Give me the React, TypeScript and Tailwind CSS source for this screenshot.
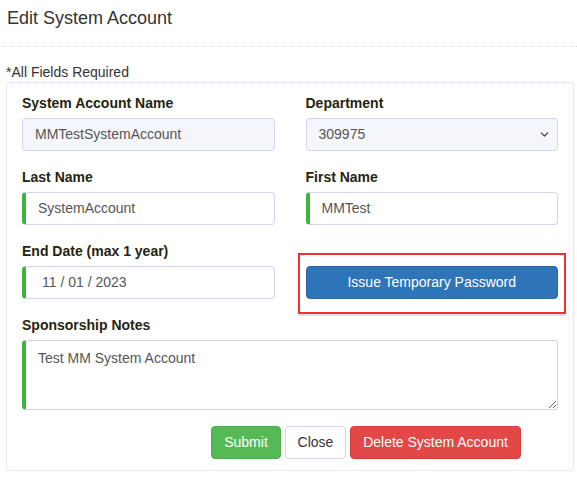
import React from 'react';
import { ChevronDown } from 'lucide-react';

const labelCls = 'block h-[20px] leading-[20px] text-[14px] font-bold text-[#24240f] mb-[5px]';

function TextInput({ value, pad = 'pl-[12px]' }: { value: string; pad?: string }) {
  return (
    <div className="h-[33px] flex items-center rounded-[4px] border border-[#d4d4ee] border-l-[4px] border-l-[#3db53d] bg-white">
      <span className={`${pad} text-[14px] text-[#555]`}>{value}</span>
    </div>
  );
}

function DisabledInput({ value, select }: { value: string; select?: boolean }) {
  return (
    <div className="h-[33px] flex items-center justify-between rounded-[4px] border border-[#d4d4ee] bg-[#f5f5fc] pl-[12px] pr-[6px]">
      <span className="text-[14px] text-[#555]">{value}</span>
      {select && <ChevronDown className="w-[13px] h-[13px] text-[#444]" strokeWidth={2.5} />}
    </div>
  );
}

export default function App() {
  return (
    <div className="w-[577px] h-[478px] bg-white font-['Liberation_Sans',Arial,sans-serif] text-[#333]">
      {/* Header */}
      <div className="h-[47px] border-b border-dotted border-[#d8d8f2] px-[7px] pt-[6px]">
        <h2 className="text-[18px] leading-[24px] text-[#333]">Edit System Account</h2>
      </div>

      <p className="px-[6px] pt-[16px] text-[14px] leading-[18px] text-[#333]">*All Fields Required</p>

      {/* Panel */}
      <div className="ml-[6px] mr-[3px] mt-[1px] h-[389px] rounded-[4px] border border-dotted border-[#d4d4ef] pl-[15px] pr-[15px] pt-[10px]">
        <div className="grid grid-cols-2 gap-x-[31px] gap-y-[16px]">
          <div>
            <label className={labelCls}>System Account Name</label>
            <DisabledInput value="MMTestSystemAccount" />
          </div>
          <div>
            <label className={labelCls}>Department</label>
            <DisabledInput value="309975" select />
          </div>
          <div>
            <label className={labelCls}>Last Name</label>
            <TextInput value="SystemAccount" />
          </div>
          <div>
            <label className={labelCls}>First Name</label>
            <TextInput value="MMTest" />
          </div>
          <div>
            <label className={labelCls}>End Date (max 1 year)</label>
            <TextInput value="11 / 01 / 2023" pad="pl-[16px]" />
          </div>
          <div className="flex flex-col justify-end">
            <div className="relative">
              <div className="absolute -left-[8px] -right-[8px] -top-[13px] -bottom-[15px] border-2 border-[#f03030] shadow-[0_2px_0_#dcdcf6]" />
              <button className="relative w-full h-[33px] rounded-[4px] bg-[#2d74b8] border border-[#2a66a0] text-white text-[14px]">
                Issue Temporary Password
              </button>
            </div>
          </div>
        </div>

        <div className="mt-[16px]">
          <label className={labelCls}>Sponsorship Notes</label>
          <textarea
            readOnly
            defaultValue="Test MM System Account"
            className="block w-full h-[70px] resize-y rounded-[4px] border border-[#d4d4ee] border-l-[4px] border-l-[#3db53d] pl-[12px] pt-[8px] text-[14px] leading-[18px] text-[#555] outline-none"
          />
        </div>

        <div className="mt-[16px] flex pl-[189px] gap-[4px]">
          <button className="h-[33px] w-[70px] rounded-[4px] bg-[#55b955] border border-[#4cae4c] text-white text-[14px]">Submit</button>
          <button className="h-[33px] w-[61px] rounded-[4px] bg-white border border-[#d4d4ee] text-[#333] text-[14px]">Close</button>
          <button className="h-[33px] w-[171px] rounded-[4px] bg-[#e24848] border border-[#d43f3a] text-white text-[14px]">Delete System Account</button>
        </div>
      </div>
    </div>
  );
}
